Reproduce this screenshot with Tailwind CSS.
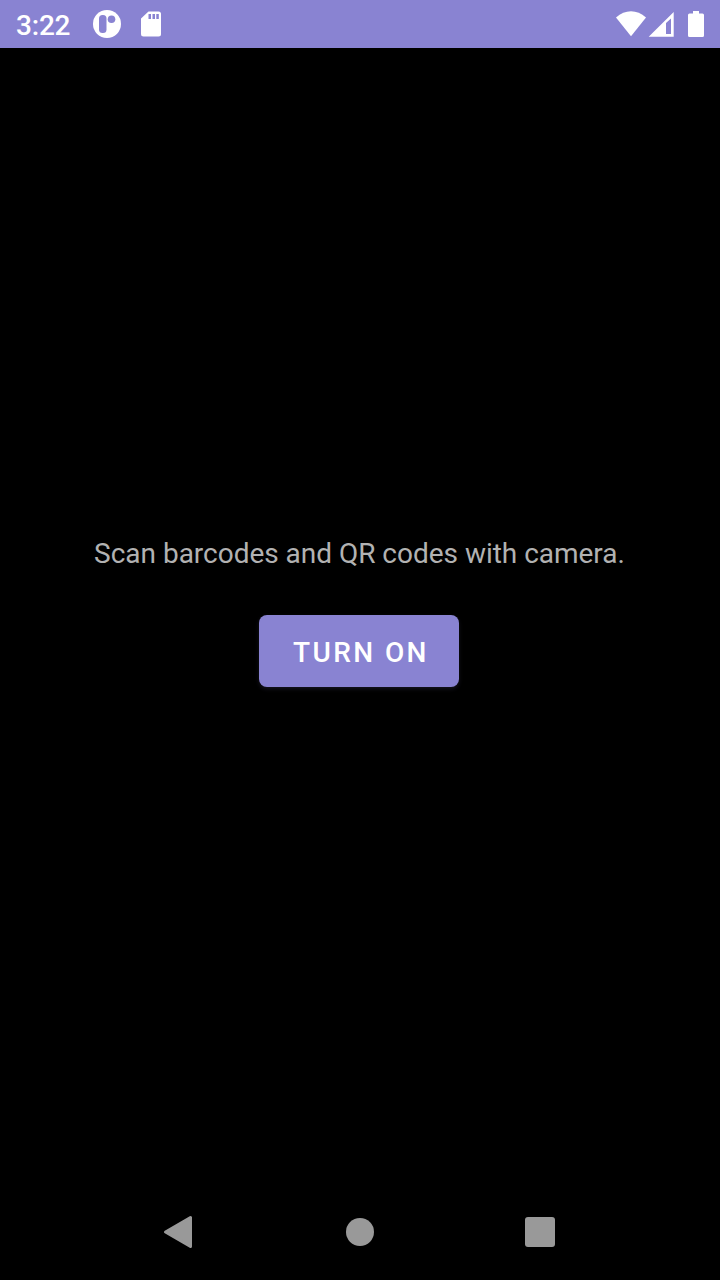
<!DOCTYPE html>
<html lang="en">
<head>
<meta charset="utf-8">
<title>Scanner</title>
<script src="https://cdn.jsdelivr.net/npm/@tailwindcss/browser@4"></script>
</head>
<body class="bg-black">
<div class="flex h-[1280px] w-[720px] flex-col overflow-hidden bg-black font-['Roboto',sans-serif]">
  <header class="flex h-12 items-center bg-[#8983d2] pl-4 text-white">
    <span class="w-[77px] pt-[3px] text-[28px] leading-[45px] font-medium tracking-[-0.2px]">3:22</span>
    <svg class="h-12 w-7" viewBox="0 0 28 48" fill="none"><circle cx="14" cy="24" r="14" fill="#fff"/><rect x="6" y="15" width="7.500" height="18" rx="3.500" fill="#8983d2"/><circle cx="18.500" cy="19.200" r="3.800" fill="#8983d2"/></svg>
    <svg class="ml-5 h-12 w-5" viewBox="0 0 20 48"><path fill="#fff" d="M7.500 11.500H17.500a2.500 2.500 0 0 1 2.500 2.500v20a2.500 2.500 0 0 1-2.500 2.500H2.500a2.500 2.500 0 0 1-2.500-2.500V18.500Z"/><path fill="#8983d2" d="M7.500 14h2.500v5H7.500zM11.500 14h2.500v5H11.500zM15.300 14h2.500v5H15.300z"/></svg>
    <svg class="ml-auto h-12 w-[104px]" viewBox="616 0 104 48" fill="#fff"><path d="M616 17.500Q623 11.300 631 11.300T646 17.500L631 36.300Z"/><path fill-rule="evenodd" d="M673.700 12V36.700H648.700ZM671 18.500L666 23V34H671Z"/><path d="M693 11h6v2.500h3.500a1.500 1.500 0 0 1 1.500 1.500v20.500a1.500 1.500 0 0 1-1.500 1.500h-13a1.500 1.500 0 0 1-1.500-1.500V15a1.500 1.500 0 0 1 1.500-1.500H693Z"/></svg>
  </header>
  <main class="flex flex-1 flex-col items-center pt-[487px] pr-[2px]">
    <p class="h-8 pl-px text-[28px] leading-[38px] tracking-[-0.02px] whitespace-nowrap text-[#b2b2b2]">Scan barcodes and QR codes with camera.</p>
    <button class="mt-12 h-[72px] w-[200px] rounded-lg bg-[#8983d2] pt-[3px] pl-[4px] text-[28px] font-medium tracking-[2.400px] whitespace-nowrap text-white shadow-[0_2px_4px_#15141f]">TURN ON</button>
  </main>
  <nav class="h-24">
    <svg class="h-24 w-[720px]" viewBox="0 1184 720 96" fill="#999"><path stroke="#999" stroke-width="3" stroke-linejoin="round" d="M165.500 1232L190.500 1217.500V1246.500Z"/><circle cx="360" cy="1232" r="14"/><rect x="525" y="1217" width="30" height="30" rx="3"/></svg>
  </nav>
</div>
</body>
</html>
